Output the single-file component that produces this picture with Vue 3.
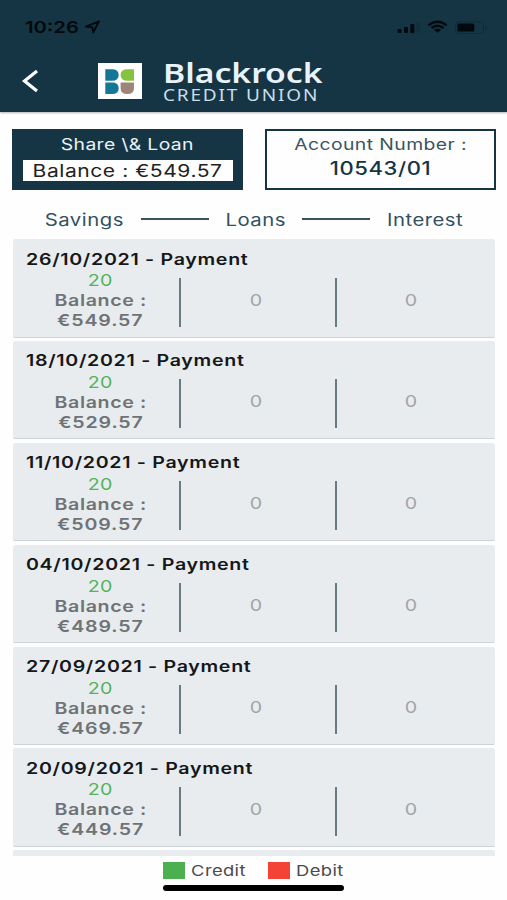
<script setup>
const rows = [
  { date: '26/10/2021', balance: '€549.57' },
  { date: '18/10/2021', balance: '€529.57' },
  { date: '11/10/2021', balance: '€509.57' },
  { date: '04/10/2021', balance: '€489.57' },
  { date: '27/09/2021', balance: '€469.57' },
  { date: '20/09/2021', balance: '€449.57' },
]
</script>

<template>
  <div class="screen">
    <header class="header">
      <div class="status">
        <span class="wide left time">10:26</span>
        <svg class="arrow" width="17" height="14" viewBox="0 0 17 14"><path d="M1.8 6.6 15 1.3 9.3 12.4 8.3 7.3Z" fill="none" stroke="#02090d" stroke-width="1.9" stroke-linejoin="round" /></svg>
        <svg class="indicators" width="92" height="16" viewBox="0 0 92 16">
          <g fill="#02090d">
            <rect x="1.5" y="10" width="4" height="4" rx="1" />
            <rect x="8" y="8" width="4" height="6" rx="1" />
            <rect x="14.3" y="5" width="4" height="9" rx="1" />
            <rect x="20.5" y="3" width="3.5" height="11" rx="1" opacity=".12" />
            <path d="M37.8 10.8 41.5 13.8 45.2 10.8Q41.5 8.6 37.8 10.8Z" />
            <rect x="61.4" y="4.6" width="17" height="8" rx="1.5" />
            <path d="M89.5 6v5q2.4-2.5 0-5Z" opacity=".3" />
          </g>
          <g fill="none" stroke="#02090d">
            <path d="M32.4 6.4Q41.5-.8 50.6 6.4M35.5 9Q41.5 4.4 47.5 9" stroke-width="2.3" />
            <rect x="59.5" y="2.7" width="28" height="11.7" rx="3" opacity=".25" />
          </g>
        </svg>
      </div>
      <div class="brand">
        <svg class="back" width="18" height="24" viewBox="0 0 18 24"><path d="M16 2 3.5 12 16 22" fill="none" stroke="#fff" stroke-width="3.2" /></svg>
        <svg class="logo" width="44" height="37" viewBox="0 0 44 37">
          <path d="M0 0h44v36H0Z" fill="#fff" />
          <path d="M7.3 6.3H14Q20.7 6.3 20.7 12T14 17.8H7.3ZM7.3 19.5H14Q20.7 19.5 20.7 25.2T14 31H7.3Z" fill="#147796" />
          <path d="M36 6.3H29.3Q22.6 6.3 22.6 12T29.3 17.8H36Z" fill="#86c440" />
          <path d="M22.6 19.5H36V25.2Q36 31 29.3 31T22.6 25.2Z" fill="#9d8579" />
        </svg>
        <div class="wordmark">
          <span class="wide left name">Blackrock</span>
          <span class="wide left union">CREDIT UNION</span>
        </div>
      </div>
    </header>

    <section class="summary">
      <div class="box share">
        <span class="wide share-title">Share \&amp; Loan</span>
        <div class="share-balance"><span class="wide">Balance : €549.57</span></div>
      </div>
      <div class="box account">
        <span class="wide account-label">Account Number :</span>
        <span class="wide account-number">10543/01</span>
      </div>
    </section>

    <div class="columns">
      <div class="column-name savings"><span class="wide">Savings</span></div>
      <i class="dash"></i>
      <div class="column-name loans"><span class="wide">Loans</span></div>
      <i class="dash"></i>
      <div class="column-name interest"><span class="wide">Interest</span></div>
    </div>

    <main class="list">
      <article v-for="row in rows" :key="row.date" class="card">
        <h2 class="title"><span class="wide left">{{ row.date }} - Payment</span></h2>
        <div class="values">
          <div class="saving">
            <span class="wide credit">20</span>
            <span class="wide balance">Balance :</span>
            <span class="wide balance amount">{{ row.balance }}</span>
          </div>
          <div class="zero"><span class="wide">0</span></div>
          <div class="zero"><span class="wide">0</span></div>
        </div>
      </article>
      <div class="card"></div>
    </main>

    <footer class="footer">
      <div class="legend">
        <i class="swatch green"></i><span class="wide left credit-label">Credit</span>
        <i class="swatch red"></i><span class="wide left debit-label">Debit</span>
      </div>
      <div class="home"></div>
    </footer>
  </div>
</template>

<style>
body { margin: 0; background: #fefefe; }
</style>

<style scoped>
.screen {
  width: 507px;
  height: 900px;
  overflow: hidden;
  display: flex;
  flex-direction: column;
  font-family: Inter, "Liberation Sans", sans-serif;
  font-size: 16px;
  letter-spacing: .4px;
  color: #163544;
  background: #fefefe;
}
.wide { display: inline-block; transform: scaleX(1.2246); white-space: nowrap; }
.left { transform-origin: 0 50%; }
.header { height: 111.5px; flex: none; background: #163544; box-shadow: 0 1px 2px rgba(0, 0, 0, .3); }
.status { height: 54px; display: flex; align-items: center; padding-left: 25px; box-sizing: border-box; }
.time { font-size: 16.5px; font-weight: 600; letter-spacing: 0; color: #02090d; width: 59px; }
.arrow { display: block; }
.indicators { margin-left: 295px; }
.brand { display: flex; align-items: center; padding-left: 21px; height: 54px; }
.logo { margin-left: 59px; }
.wordmark { margin-left: 21px; height: 47px; color: #e9f3fa; font-family: "Noto Sans", sans-serif; display: flex; flex-direction: column; }
.name { font-size: 27.5px; line-height: 30px; font-weight: 600; letter-spacing: 0; }
.union { font-size: 15.5px; line-height: 16px; margin-top: -1px; letter-spacing: 1.5px; color: #c9deeb; }
.summary { display: flex; justify-content: space-between; padding: 17.5px 11px 0 12px; flex: none; }
.box { width: 231px; height: 61px; box-sizing: border-box; display: flex; flex-direction: column; align-items: center; }
.share { background: #163544; color: #e9f3f7; }
.share-title { font-size: 15.8px; letter-spacing: .3px; line-height: 20px; margin-top: 6px; }
.share-balance { width: 210px; height: 21px; line-height: 22px; margin-top: 5px; background: #fefefe; color: #222; text-align: center; font-size: 17.2px; letter-spacing: .45px; }
.account { border: 2px solid #163544; }
.account-label { font-size: 15.8px; letter-spacing: .35px; line-height: 20px; margin-top: 4px; color: #3b5461; }
.account-number { font-size: 18px; letter-spacing: .5px; line-height: 22px; margin-top: 3px; font-weight: 550; }
.columns { height: 49px; padding-top: 11px; box-sizing: border-box; display: flex; align-items: center; color: #34505e; font-size: 16.6px; flex: none; }
.column-name { text-align: center; }
.savings { width: 113px; margin-left: 28px; }
.loans { width: 93px; }
.interest { width: 110px; }
.dash { width: 68px; height: 2px; margin-top: -2px; background: #345464; }
.list { height: 617px; padding: 0 12px 0 13px; overflow: hidden; flex: none; }
.card { height: 98.5px; margin-bottom: 3.4px; box-sizing: border-box; border-radius: 2px; border-bottom: 1px solid #cfd3d6; background: #e8ecef; padding-left: 13px; }
.title { margin: 0; padding-top: 8.5px; font-size: 16px; letter-spacing: .57px; line-height: 22px; font-weight: 640; color: #151719; }
.values { display: flex; margin-top: .5px; }
.saving { width: 149px; margin-right: 4px; display: flex; flex-direction: column; align-items: center; }
.saving .wide { line-height: 20px; }
.credit { color: #52b35a; }
.balance { font-weight: 600; letter-spacing: .5px; color: #6f7376; }
.amount { letter-spacing: .7px; }
.zero { width: 155.5px; height: 49px; line-height: 45px; margin-top: 7.5px; padding-right: 4px; box-sizing: border-box; border-left: 2px solid #687b83; text-align: center; color: #a0a4a6; }
.footer { flex: none; display: flex; flex-direction: column; align-items: center; }
.legend { display: flex; align-items: center; height: 29px; width: 182px; font-size: 15px; letter-spacing: .3px; color: #4b4b4b; }
.swatch { width: 22px; height: 17px; flex: none; }
.green { background: #4caf50; }
.red { background: #f44336; }
.credit-label { width: 62px; padding-left: 5px; margin-right: 16px; }
.debit-label { padding-left: 5px; }
.home { width: 181px; height: 6px; border-radius: 3px; background: #000; }
</style>
